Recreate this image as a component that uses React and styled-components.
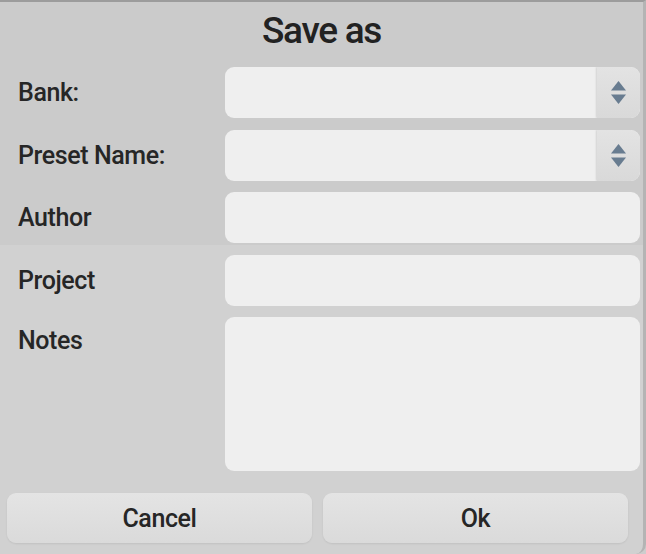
import React from 'react';
import styled, { createGlobalStyle } from 'styled-components';

const GlobalStyle = createGlobalStyle`
  html, body {
    margin: 0;
    padding: 0;
    background: #cdcdcd;
  }
  * {
    box-sizing: border-box;
  }
`;

// dialog window
const Dialog = styled.div`
  width: 646px;
  height: 554px;
  display: flex;
  flex-direction: column;
  border-top: 2px solid #9c9c9c;
  border-right: 3px solid #b4b4b4;
  border-bottom-right-radius: 10px;
  background: linear-gradient(180deg, #cbcbcb 0px, #cbcbcb 243px, #d1d1d1 243px, #d1d1d1 100%);
  font-family: Roboto, 'Liberation Sans', sans-serif;
  color: #262626;
  overflow: hidden;
`;

const Title = styled.h1`
  margin: 0;
  height: 65px;
  display: flex;
  align-items: center;
  justify-content: center;
  font-size: 37px;
  font-weight: 500;
  letter-spacing: -1.3px;
  padding-bottom: 8px;
  color: #222;
`;

const Form = styled.div`
  display: grid;
  grid-template-columns: 207px 1fr;
  row-gap: 11.5px;
  padding: 0 3px 0 18px;
`;

const Label = styled.label`
  font-size: 25px;
  font-weight: 500;
  letter-spacing: -0.4px;
  padding-top: ${(p) => (p.$top ? '9px' : '0')};
  display: flex;
  align-items: ${(p) => (p.$top ? 'flex-start' : 'center')};
  height: ${(p) => (p.$top ? 'auto' : '51px')};
`;

const Field = styled.div`
  height: ${(p) => p.$h || 51}px;
  background: #efefef;
  border-radius: 9px;
  display: flex;
  justify-content: flex-end;
  overflow: hidden;
`;

const Spinner = styled.div`
  width: 43px;
  height: 100%;
  background: linear-gradient(180deg, #e3e3e3 0%, #d9d9d9 100%);
  box-shadow: -1px 0 2px rgba(0, 0, 0, 0.12);
  border-radius: 0 9px 9px 0;
  display: flex;
  align-items: center;
  justify-content: center;
`;

const Buttons = styled.div`
  display: grid;
  grid-template-columns: 305px 305px;
  column-gap: 11px;
  padding: 0 0 0 7px;
  margin-top: 22px;
`;

const Button = styled.button`
  height: 50px;
  border: none;
  border-radius: 9px;
  background: linear-gradient(180deg, #e4e4e4 0%, #dadada 100%);
  box-shadow: 0 1px 2px rgba(0, 0, 0, 0.08);
  font-family: Roboto, 'Liberation Sans', sans-serif;
  font-size: 25px;
  font-weight: 500;
  color: #262626;
  letter-spacing: -0.4px;
  cursor: pointer;
`;

function Arrows() {
  return (
    <svg width="17" height="25" viewBox="0 0 17 25">
      <polygon points="8.5,1 16,10.5 1,10.5" fill="#687c90" />
      <polygon points="1,14.5 16,14.5 8.5,24" fill="#687c90" />
    </svg>
  );
}

export default function App() {
  return (
    <>
      <GlobalStyle />
      <Dialog>
        <Title>Save as</Title>
        <Form>
          <Label>Bank:</Label>
          <Field>
            <Spinner><Arrows /></Spinner>
          </Field>
          <Label>Preset Name:</Label>
          <Field>
            <Spinner><Arrows /></Spinner>
          </Field>
          <Label>Author</Label>
          <Field />
          <Label>Project</Label>
          <Field />
          <Label $top>Notes</Label>
          <Field $h={154} />
        </Form>
        <Buttons>
          <Button>Cancel</Button>
          <Button>Ok</Button>
        </Buttons>
      </Dialog>
    </>
  );
}
